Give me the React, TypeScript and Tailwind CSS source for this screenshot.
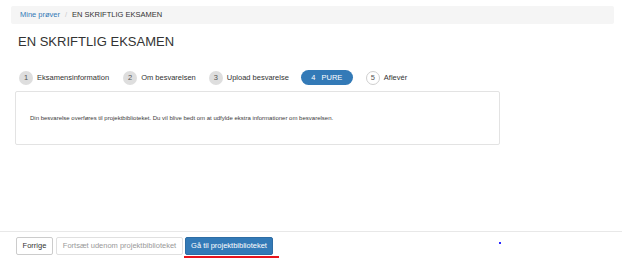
// Eksamensflow: trin 4 (PURE) med knapper til projektbiblioteket.
const steps = [
  { n: 1, label: "Eksamensinformation", state: "done" },
  { n: 2, label: "Om besvarelsen", state: "done" },
  { n: 3, label: "Upload besvarelse", state: "done" },
  { n: 4, label: "PURE", state: "active" },
  { n: 5, label: "Aflevér", state: "todo" },
] as const;

function Step({ n, label, state }: { n: number; label: string; state: "done" | "active" | "todo" }) {
  if (state === "active") {
    return (
      <div className="flex h-[15px] w-[52px] items-center justify-center gap-[6px] rounded-full bg-[#337ab7] text-white">
        <span>{n}</span>
        <span>{label}</span>
      </div>
    );
  }

  return (
    <div className="flex items-center gap-[4px]">
      <span
        className={
          state === "done"
            ? "flex h-[14px] w-[14px] items-center justify-center rounded-full bg-[#dedede] text-[#555]"
            : "flex h-[14px] w-[14px] items-center justify-center rounded-full border border-[#cfcfcf] bg-white text-[#555]"
        }
      >
        {n}
      </span>
      <span className="text-[#333]">{label}</span>
    </div>
  );
}

export default function App() {
  return (
    <div className="relative h-[262px] w-[642px] overflow-hidden bg-white font-['Liberation_Sans',Arial,sans-serif] text-[7.5px] leading-none text-[#333]">
      <nav className="ml-[11px] mt-[6px] flex h-[18px] w-[603px] items-center rounded-[2px] bg-[#f5f5f5] px-[9px]">
        <span className="text-[#337ab7]">Mine prøver</span>
        <span className="mx-[5px] text-[#ccc]">/</span>
        <span className="text-[#333]">EN SKRIFTLIG EKSAMEN</span>
      </nav>

      <h1 className="ml-[18px] mt-[10px] text-[13px] leading-[15px] text-[#333]">EN SKRIFTLIG EKSAMEN</h1>

      <div className="ml-[19px] mt-[21px] flex h-[15px] items-center">
        <Step {...steps[0]} />
        <div className="w-[14px]" />
        <Step {...steps[1]} />
        <div className="w-[13px]" />
        <Step {...steps[2]} />
        <div className="w-[12px]" />
        <Step {...steps[3]} />
        <div className="w-[13px]" />
        <Step {...steps[4]} />
      </div>

      <div className="ml-[15px] mt-[6px] flex h-[54px] w-[485px] items-center rounded-[2px] border border-[#e3e3e3] px-[14px]">
        <p className="text-[6px] text-[#3a3a3a]">
          Din besvarelse overføres til projektbiblioteket. Du vil blive bedt om at udfylde ekstra informationer om besvarelsen.
        </p>
      </div>

      <div className="mt-[86px] w-[622px] border-t border-[#e8e8e8] pl-[16px] pt-[5px]">
        <div className="flex gap-[3px]">
          <button className="h-[18px] w-[37px] rounded-[2px] border border-[#ccc] bg-white text-[#333]">Forrige</button>
          <button className="h-[18px] w-[127px] rounded-[2px] border border-[#e0e0e0] bg-white text-[#999]">
            Fortsæt udenom projektbiblioteket
          </button>
          <div className="flex flex-col">
            <button className="ml-[-1px] h-[18px] w-[88px] rounded-[2px] border border-[#2e6da4] bg-[#337ab7] text-white">
              Gå til projektbiblioteket
            </button>
            <span className="ml-[-2px] mt-[1px] h-[2px] w-[95px] bg-[#e8141c]" />
          </div>
        </div>
      </div>

      <span className="absolute left-[499px] top-[242px] h-[2px] w-[2px] bg-[#2a2aff]" />
    </div>
  );
}
